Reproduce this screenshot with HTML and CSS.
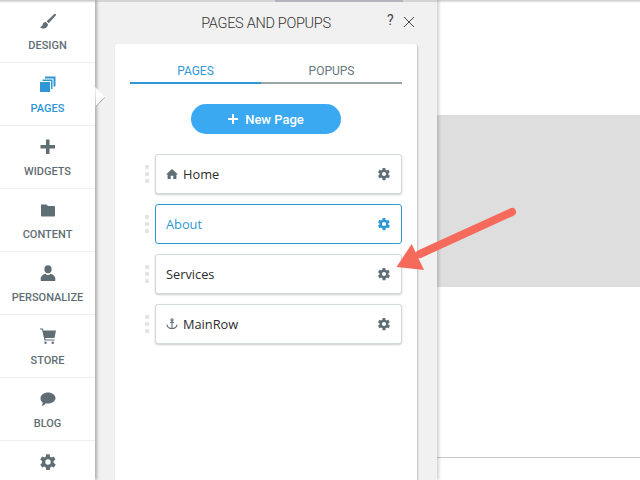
FILE: index.html
```html
<!DOCTYPE html>
<html lang="en">
<head>
<meta charset="utf-8">
<title>Pages and Popups</title>
<link rel="stylesheet" href="styles.css">
</head>
<body>
<svg width="0" height="0" class="defs">
  <defs>
    <symbol id="gear" viewBox="0 0 24 24"><path d="M19.4 13.2c.1-.4.1-.8.1-1.200s0-.8-.1-1.200l2.500-2-2.400-4.100-3 1.200c-.6-.5-1.300-.9-2.100-1.200L14.400 1.500H9.600L9.200 4.700c-.8.3-1.500.7-2.100 1.200l-3-1.200L1.700 8.800l2.500 2c-.1.4-.1.8-.1 1.200s0 .8.1 1.200l-2.500 2 2.400 4.100 3-1.200c.6.5 1.300.9 2.100 1.200l.4 3.200h4.800l.4-3.200c.8-.3 1.500-.7 2.100-1.200l3 1.200 2.400-4.100-2.500-2zM12 15.600a3.600 3.600 0 1 1 0-7.200 3.600 3.600 0 0 1 0 7.200z"/></symbol>
  </defs>
</svg>
<div class="app">
  <nav class="sidebar">
    <a class="nav-item">
      <svg class="nav-icon" viewBox="0 0 16 16"><path d="M15.800 1.200c-.4-.6-1-.7-1.500-.3L6.700 8.200l2 2 7-7.600c.4-.5.400-1 .1-1.400zM5.700 9C3.900 8.900 3.100 10 2.800 11.300 2.500 12.500 1.800 13.600 0 14.200c1.800 1.500 4.800 1.700 6.400.3 1.200-1 1.700-2.300 1.500-3.500z"/></svg>
      <span>DESIGN</span>
    </a>
    <a class="nav-item active">
      <svg class="nav-icon" viewBox="0 0 16 16"><path d="M0 6h10v10H0z"/><path d="M2.500 5V3.500H12.500V13H11V5z"/><path d="M5 2.500V.5H15.500V10.500H13.500V2.500z"/></svg>
      <span>PAGES</span>
    </a>
    <a class="nav-item">
      <svg class="nav-icon" viewBox="0 0 16 16"><path d="M6 .5h3.500V6H15v3.500H9.500V15H6V9.500H.5V6H6z"/></svg>
      <span>WIDGETS</span>
    </a>
    <a class="nav-item">
      <svg class="nav-icon" viewBox="0 0 16 16"><path d="M1 2.500h5.500l1.500 1.500h6.300c.4 0 .7.300.7.700v9.100c0 .4-.3.700-.7.700H1.700c-.4 0-.7-.3-.7-.7z"/></svg>
      <span>CONTENT</span>
    </a>
    <a class="nav-item">
      <svg class="nav-icon" viewBox="0 0 16 16"><ellipse cx="8" cy="4.200" rx="3.600" ry="4"/><path d="M.7 16v-2.500c0-2.700 3-4.300 4.800-4.700.7.800 1.500 1.200 2.500 1.200s1.800-.4 2.500-1.200c1.800.4 4.800 2 4.800 4.700V16z"/></svg>
      <span>PERSONALIZE</span>
    </a>
    <a class="nav-item">
      <svg class="nav-icon" viewBox="0 0 16 16"><path d="M0 .5h2.800l.7 2H16l-1.500 7.500H5.200l.3 1.500h9v1H4.500L2 1.500H0z"/><circle cx="5.500" cy="14.800" r="1.200"/><circle cx="12.700" cy="14.800" r="1.200"/></svg>
      <span>STORE</span>
    </a>
    <a class="nav-item">
      <svg class="nav-icon" viewBox="0 0 16 16"><path d="M8 1.500c4.200 0 7.500 2.500 7.500 5.500s-3.300 5.500-7.500 5.500c-.8 0-1.500-.1-2.200-.2C4.500 14.200 3 14.800 1.300 15c.8-.8 1.400-2 1.500-3.300C1.300 10.700.5 9 .5 7c0-3 3.300-5.500 7.500-5.500z"/></svg>
      <span>BLOG</span>
    </a>
    <a class="nav-item">
      <svg class="nav-icon gear-nav" viewBox="0 0 24 24"><use href="#gear"/></svg>
    </a>
  </nav>
  <section class="panel">
    <header class="panel-head">
      <h1>PAGES AND POPUPS</h1>
      <span class="help">?</span>
      <svg class="close" viewBox="0 0 12 12"><path d="M1 1l10 10M11 1L1 11"/></svg>
    </header>
    <div class="card">
      <div class="tabs">
        <div class="tab current">PAGES</div>
        <div class="tab">POPUPS</div>
      </div>
      <button class="new-page">
        <svg viewBox="0 0 10 10"><path d="M4 0h2v4h4v2H6v4H4V6H0V4h4z"/></svg>
        New Page
      </button>
      <ul class="pages">
        <li class="page-row">
          <span class="grip"><i></i><i></i><i></i></span>
          <div class="page">
            <svg class="lead" viewBox="0 0 12 12"><path d="M6 1l6 5.500h-1.600V11H7.300V7.700H4.700V11H1.600V6.500H0z"/></svg>
            <span class="name">Home</span>
            <svg class="gear"><use href="#gear"/></svg>
          </div>
        </li>
        <li class="page-row">
          <span class="grip"><i></i><i></i><i></i></span>
          <div class="page selected">
            <span class="name">About</span>
            <svg class="gear"><use href="#gear"/></svg>
          </div>
        </li>
        <li class="page-row">
          <span class="grip"><i></i><i></i><i></i></span>
          <div class="page">
            <span class="name">Services</span>
            <svg class="gear"><use href="#gear"/></svg>
          </div>
        </li>
        <li class="page-row">
          <span class="grip"><i></i><i></i><i></i></span>
          <div class="page">
            <svg class="lead anchor" viewBox="0 0 12 12"><circle cx="6" cy="1.800" r="1.100"/><path d="M6 3v8M4 4.500h4M1 6.500c0 2.500 2.500 4 5 4s5-1.500 5-4"/></svg>
            <span class="name">MainRow</span>
            <svg class="gear"><use href="#gear"/></svg>
          </div>
        </li>
      </ul>
    </div>
  </section>
  <main class="canvas">
    <div class="band"></div>
    <div class="rule"></div>
  </main>
  <svg class="arrow" viewBox="0 0 640 480"><path d="M512 212L420 254" class="arrow-shaft"/><path d="M396.500 267L411.700 244 424 270z" class="arrow-head"/></svg>
</div>
</body>
</html>
```
FILE: styles.css
```css
* { box-sizing: border-box; }
html, body { margin: 0; padding: 0; height: 100%; overflow: hidden; background: #fff; }
body { font-family: Roboto, "Liberation Sans", sans-serif; }
.defs { position: absolute; }
.app { position: relative; display: flex; width: 640px; height: 480px; overflow: hidden; }

.sidebar { position: relative; z-index: 3; flex: 0 0 95px; height: 480px; background: #fff; box-shadow: 2px 0 3px rgba(0,0,0,.28); }
.sidebar::before { content: ""; position: absolute; left: 0; right: 0; top: 0; height: 3px; background: linear-gradient(#c4c4c4, #fff); }
.nav-item { display: flex; flex-direction: column; align-items: center; height: 63px; padding-top: 13px; border-bottom: 1px solid #eeeeee; color: #5f6e75; font-size: 11px; font-weight: 500; }
.nav-item span { margin-top: 10px; line-height: 14px; }
.nav-icon { width: 16px; height: 16px; fill: currentColor; }
.gear-nav { width: 18px; height: 18px; margin-top: -1px; }
.nav-item.active { position: relative; color: #2f97d5; }
.nav-item.active::after { content: ""; position: absolute; left: 88px; top: 27px; width: 14px; height: 14px; background: #fff; border-right: 1px solid #9e9e9e; transform: rotate(45deg); clip-path: polygon(0 0, 100% 0, 100% 100%); }

.panel { position: relative; z-index: 2; flex: 0 0 342px; height: 480px; background: #f1f1f1; padding: 0 20px; box-shadow: 2px 0 3px rgba(0,0,0,.18); border-top: 2px solid #d4d4d4; }
.panel::before { content: ""; position: absolute; left: 180px; top: -2px; width: 128px; height: 2px; background: #b4b4bc; }
.panel-head { position: relative; display: flex; align-items: center; justify-content: center; height: 42px; color: #444; }
.panel-head h1 { margin: 0; font-size: 14.500px; font-weight: 300; letter-spacing: -.3px; color: #333; }
.help { position: absolute; left: 272px; top: 9px; font-size: 14px; line-height: 18px; }
.close { position: absolute; left: 288px; top: 14px; width: 12px; height: 12px; stroke: #444; stroke-width: 1; fill: none; }

.card { height: 440px; background: #fff; border-radius: 3px; box-shadow: 1px 1px 2px rgba(0,0,0,.2); padding: 17px 15px 0; }
.tabs { display: flex; height: 23px; }
.tab { flex: 0 0 141px; text-align: center; font-size: 12px; line-height: 20px; font-weight: 400; color: #66777f; border-bottom: 2px solid #9aa5a9; }
.tab.current { flex-basis: 131px; color: #2f97d5; border-bottom-color: #2f97d5; }

.new-page { display: flex; align-items: center; justify-content: center; gap: 7px; width: 150px; height: 30px; margin: 20px auto 0; padding: 0; border: 0; border-radius: 15px; background: #3aa9f2; color: #fff; font-family: Roboto, sans-serif; font-size: 13px; font-weight: 500; }
.new-page svg { width: 10px; height: 10px; fill: #fff; }

.pages { list-style: none; margin: 20px 0 0; padding: 0; display: flex; flex-direction: column; gap: 10px; }
.page-row { display: flex; align-items: center; height: 40px; padding-left: 15px; gap: 6px; }
.grip { display: flex; flex-direction: column; gap: 3.500px; width: 4px; }
.grip i { display: block; width: 3.500px; height: 3.500px; border-radius: 1px; background: #e4e4e4; }
.page { flex: 1; display: flex; align-items: center; height: 40px; padding: 0 10px; background: #fff; border: 1px solid #d3d8da; border-radius: 3px; box-shadow: 0 1px 2px rgba(0,0,0,.2); color: #2b2b2b; font-family: "Open Sans", sans-serif; font-size: 12.800px; }
.lead { width: 12px; height: 12px; margin-right: 5px; fill: #5f6e75; }
.anchor { stroke: #5f6e75; stroke-width: 1.100; fill: none; }
.name { flex: 1; }
.gear { width: 14px; height: 14px; fill: #5f6e75; }
.page.selected { border-color: #2f97d5; color: #2f97d5; box-shadow: none; }
.page.selected .gear { fill: #2f97d5; }

.canvas { position: relative; z-index: 1; flex: 1; height: 480px; padding-top: 115px; background: #fff; }
.canvas::before { content: ""; position: absolute; left: 0; right: 0; top: 0; height: 3px; background: linear-gradient(#c9c9c9, #fff); }
.band { height: 172px; background: #dedede; }
.rule { height: 1px; margin-top: 170px; background: #c8c8c8; }

.arrow { position: absolute; left: 0; top: 0; width: 640px; height: 480px; z-index: 5; pointer-events: none; }
.arrow-shaft { stroke: #f66a5b; stroke-width: 8; stroke-linecap: round; fill: none; }
.arrow-head { fill: #f66a5b; }
```
